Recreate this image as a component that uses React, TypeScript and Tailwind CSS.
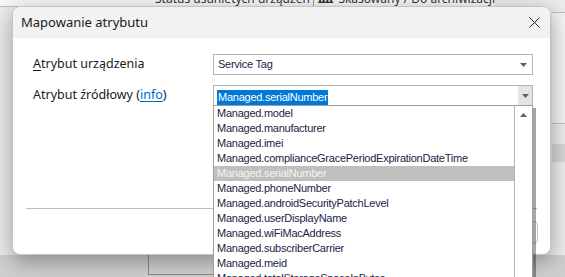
import React from 'react'

const items = [
  'Managed.model',
  'Managed.manufacturer',
  'Managed.imei',
  'Managed.complianceGracePeriodExpirationDateTime',
  'Managed.serialNumber',
  'Managed.phoneNumber',
  'Managed.androidSecurityPatchLevel',
  'Managed.userDisplayName',
  'Managed.wiFiMacAddress',
  'Managed.subscriberCarrier',
  'Managed.meid',
  'Managed.totalStorageSpaceInBytes',
]

const ui = { fontFamily: '"Noto Sans", "Liberation Sans", sans-serif' }
const tahoma = { fontFamily: '"Liberation Sans", "DejaVu Sans", sans-serif' }

function Arrow({ up = false }: { up?: boolean }) {
  return (
    <svg width="7" height="4" viewBox="0 0 7 4" className={up ? 'rotate-180' : ''}>
      <path d="M0 0h7L3.5 4z" fill="#606060" />
    </svg>
  )
}

function Backdrop() {
  return (
    <div className="flex flex-col h-full bg-[#ececec]" style={ui}>
      <div className="h-[7px] flex border-b border-[#bdbdbd] bg-[#f7f7f7] overflow-hidden text-[12px] text-[#333] mr-[70px]">
        <div className="w-[322px] pl-[155px] leading-[14px] -mt-[8px] whitespace-nowrap">Status usunietych urządzeń</div>
        <div className="border-l border-[#999] pl-[4px] flex gap-[6px] leading-[14px] -mt-[8px] whitespace-nowrap">
          <span className="font-bold tracking-[-1px]">IIII</span>
          <span>Skasowany / Do archiwizacji</span>
        </div>
      </div>
      <div className="flex-1 flex justify-end">
        <div className="w-[13px] flex flex-col">
          <div className="h-[6px] border-b border-[#bdbdbd]" />
          <div className="h-[111px] border-b border-[#c4c4c4] bg-[#f4f4f4]" />
          <div className="h-[20px]" />
          <div className="h-[18px] bg-[#d6d6d6]" />
          <div className="flex-1" />
        </div>
      </div>
      <div className="h-[22px] pl-[148px] bg-[#cfcfcf]">
        <div className="w-[80px] h-[20px] border-l border-b border-[#8a8a8a]" />
      </div>
    </div>
  )
}

function SourceCombo() {
  return (
    <div className="relative w-[320px] h-[21px] border border-[#b4b4b4] bg-white flex items-center" style={tahoma}>
      <div className="flex-1 pl-[3px]">
        <span className="bg-[#0078d7] text-white text-[11px] tracking-[-0.25px] leading-[15px] px-[1px] inline-block">
          Managed.serialNumber
        </span>
      </div>
      <div className="w-[14px] h-full bg-[#e4e4e4] flex items-center justify-center">
        <Arrow />
      </div>
      <div className="absolute left-[-1px] top-[19px] w-[320px] h-[200px] bg-white border border-[#9e9e9e] flex shadow-[3px_3px_0_rgba(0,0,0,0.35)] z-10">
        <div className="flex-1 flex flex-col">
          {items.map((it) => (
            <div
              key={it}
              className={`h-[15px] leading-[15px] pl-[3px] text-[11px] tracking-[-0.25px] whitespace-nowrap ${
                it === 'Managed.serialNumber' ? 'bg-[#bfbfbf] text-[#f4f4f4]' : 'text-[#1c1c44]'
              }`}
            >
              {it}
            </div>
          ))}
        </div>
        <div className="w-[18px] border-l border-[#b4b4b4] flex justify-center pt-[7px]">
          <Arrow up />
        </div>
      </div>
    </div>
  )
}

export default function App() {
  return (
    <div className="relative w-[565px] h-[277px] overflow-hidden">
      <Backdrop />
      <div
        className="absolute left-[12px] top-[6px] w-[539px] h-[249px] rounded-[8px] bg-white border border-[#c4c4c4] shadow-[0_6px_22px_rgba(0,0,0,0.35)] flex flex-col"
        style={ui}
      >
        <div className="h-[31px] bg-[#f2f2f2] rounded-t-[8px] flex items-center justify-between pl-[8px] pr-[10px] text-[13px] text-[#1a1a1a]">
          <span>Mapowanie atrybutu</span>
          <svg width="11" height="11" viewBox="0 0 11 11">
            <path d="M0.5 0.5l10 10M10.5 0.5l-10 10" stroke="#222" strokeWidth="1" />
          </svg>
        </div>
        <div className="flex-1 flex flex-col pt-[16px] px-[12px]">
          <div className="flex flex-col gap-[10px] pl-[8px]">
            <div className="flex items-center">
              <div className="w-[180px] text-[12.5px] text-[#1a1a1a]">
                <span className="underline underline-offset-2">A</span>trybut urządzenia
              </div>
              <div
                className="w-[320px] h-[21px] border border-[#b4b4b4] bg-white flex items-center pl-[4px] pr-[5px] justify-between"
                style={tahoma}
              >
                <span className="text-[11px] tracking-[-0.25px] text-[#1c1c44]">Service Tag</span>
                <Arrow />
              </div>
            </div>
            <div className="flex items-center">
              <div className="w-[180px] text-[12.5px] text-[#1a1a1a]">
                Atrybut źródłowy (<span className="text-[#0066cc] underline underline-offset-2">info</span>)
              </div>
              <SourceCombo />
            </div>
          </div>
          <div className="mt-[102px] border-t border-[#bcbcbc] mx-[1px]" />
          <div className="flex justify-end pt-[12px]">
            <div className="w-[80px] h-[23px] rounded-[4px] border border-[#c8c8c8] bg-[#fbfbfb]" />
          </div>
        </div>
      </div>
    </div>
  )
}
